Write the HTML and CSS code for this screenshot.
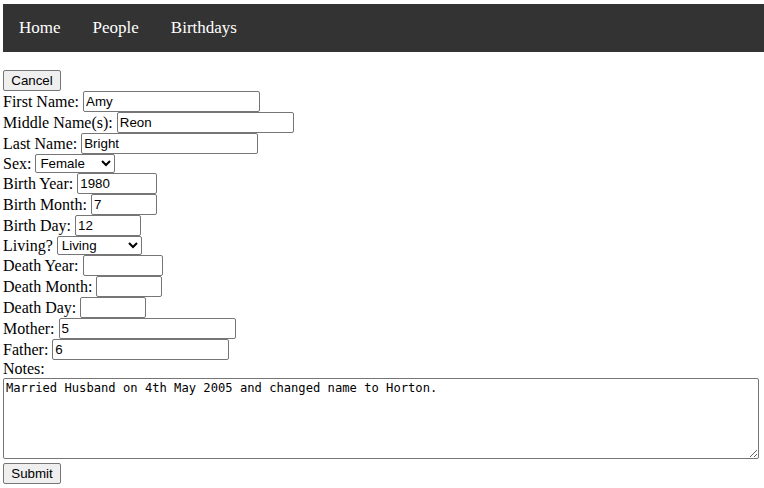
FILE: index.html
```html
<!DOCTYPE html>
<html>
<head>
<meta charset="utf-8">
<link rel="stylesheet" href="styles.css">
</head>
<body>
<div class="page">
  <nav class="nav">
    <a href="#">Home</a>
    <a href="#">People</a>
    <a href="#">Birthdays</a>
  </nav>
  <form class="form">
    <div class="btnrow"><button type="button" class="btn">Cancel</button></div>
    <div class="row"><label>First Name:</label><input class="w-long" value="Amy"></div>
    <div class="row"><label>Middle Name(s):</label><input class="w-long" value="Reon"></div>
    <div class="row"><label>Last Name:</label><input class="w-long" value="Bright"></div>
    <div class="row sel"><label>Sex:</label><select class="w-sex"><option>Female</option><option>Male</option></select></div>
    <div class="row"><label>Birth Year:</label><input class="w-year" value="1980"></div>
    <div class="row"><label>Birth Month:</label><input class="w-short" value="7"></div>
    <div class="row"><label>Birth Day:</label><input class="w-short" value="12"></div>
    <div class="row sel"><label>Living?</label><select class="w-living"><option>Living</option><option>Deceased</option></select></div>
    <div class="row"><label>Death Year:</label><input class="w-year" value=""></div>
    <div class="row"><label>Death Month:</label><input class="w-short" value=""></div>
    <div class="row"><label>Death Day:</label><input class="w-short" value=""></div>
    <div class="row"><label>Mother:</label><input class="w-long" value="5"></div>
    <div class="row"><label>Father:</label><input class="w-long" value="6"></div>
    <div class="notes-label">Notes:</div>
    <textarea class="notes">Married Husband on 4th May 2005 and changed name to Horton.</textarea>
    <div class="btnrow submit"><button type="submit" class="btn">Submit</button></div>
  </form>
</div>
</body>
</html>
```

FILE: styles.css
```css
html, body {
  margin: 0;
  padding: 0;
  background: #fff;
}
body {
  font-family: "Liberation Serif", "Times New Roman", serif;
  font-size: 16px;
  color: #000;
}
.page {
  padding: 4px 0 0 3px;
}
.nav {
  display: flex;
  background: #333333;
  height: 48px;
}
.nav a {
  display: block;
  color: #fff;
  text-decoration: none;
  padding: 14px 16px;
  line-height: 20px;
  font-size: 17px;
}
.form {
  display: flex;
  flex-direction: column;
  align-items: flex-start;
  margin-top: 18px;
}
.btnrow {
  display: flex;
  height: 21px;
  align-items: flex-start;
}
.btn {
  font-family: "Liberation Sans", Arial, sans-serif;
  font-size: 13.333px;
  width: 58px;
  height: 21px;
  padding: 1px 6px;
  margin: 0;
  background: #efefef;
  border: 1px solid #767676;
  border-radius: 2px;
  color: #000;
  line-height: normal;
}
.row {
  display: flex;
  align-items: center;
  height: 21px;
  gap: 4px;
}
.row.sel {
  height: 19px;
}
.row label {
  line-height: 18px;
  white-space: nowrap;
}
.row input {
  font-family: "Liberation Sans", Arial, sans-serif;
  font-size: 13.333px;
  box-sizing: border-box;
  height: 21px;
  padding: 1px 2px;
  margin: 0;
  border: 1px solid #767676;
  border-radius: 2px;
  color: #000;
  background: #fff;
}
.row select {
  font-family: "Liberation Sans", Arial, sans-serif;
  font-size: 13.333px;
  box-sizing: border-box;
  height: 19px;
  margin: 0;
  border: 1px solid #767676;
  border-radius: 2px;
  color: #000;
  background: #fff;
}
.w-long { width: 177px; }
.w-year { width: 80px; }
.w-short { width: 66px; }
.w-sex { width: 80px; }
.w-living { width: 85px; }
.notes-label {
  height: 18px;
  line-height: 18px;
}
.notes {
  display: block;
  box-sizing: border-box;
  width: 756px;
  height: 81px;
  margin: 0;
  padding: 2px;
  border: 1px solid #767676;
  border-radius: 2px;
  font-family: "DejaVu Sans Mono", "Liberation Mono", monospace;
  font-size: 12.15px;
  line-height: 15px;
  color: #000;
  resize: both;
}
.submit {
  margin-top: 4px;
}
```
